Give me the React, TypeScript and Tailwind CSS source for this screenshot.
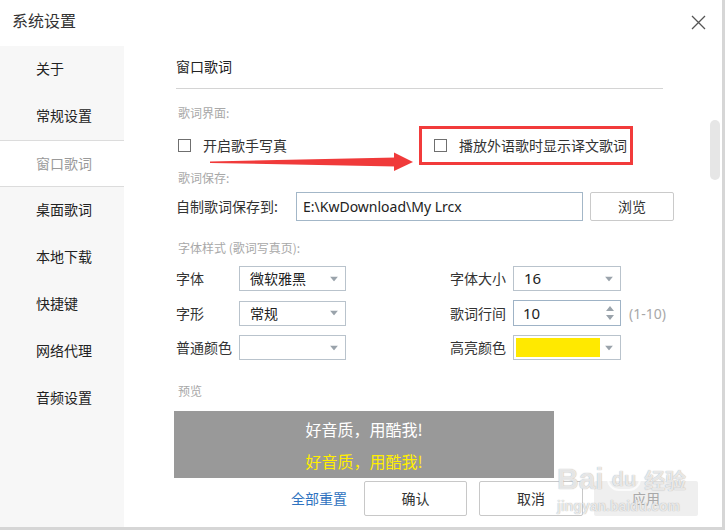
import type { ReactNode } from "react";

const Caret = () => (
  <svg width="8" height="5" viewBox="0 0 8 5" className="absolute right-[7px] top-1/2 -translate-y-1/2">
    <path d="M0 0 L8 0 L4 5 Z" fill="#9aa3ab" />
  </svg>
);

function Select({ w, children }: { w: string; children?: ReactNode }) {
  return (
    <div className={`relative flex h-[25px] items-center border border-[#b9c3cc] bg-white pl-[10px] text-[14px] text-[#222] ${w}`}>
      {children}
      <Caret />
    </div>
  );
}

const Box = () => <span className="h-[13px] w-[13px] shrink-0 border border-[#6f6f6f] bg-white" />;

const NAV = ["关于", "常规设置", "窗口歌词", "桌面歌词", "本地下载", "快捷键", "网络代理", "音频设置"];

export default function App() {
  return (
    <div className="h-[530px] w-[725px] bg-[#d6d6d6] font-['Microsoft_YaHei','Noto_Sans_CJK_SC',sans-serif]">
      <div className="relative flex h-[527px] w-[722px] flex-col bg-white">
        {/* title bar */}
        <div className="flex h-[46px] items-start justify-between">
          <span className="pl-[12px] pt-[9px] text-[16px] leading-[22px] text-[#333]">系统设置</span>
          <svg width="15" height="15" viewBox="0 0 15 15" className="mr-[16px] mt-[15px]">
            <path d="M1 1 L14 14 M14 1 L1 14" stroke="#555" strokeWidth="1.3" />
          </svg>
        </div>

        <div className="flex flex-1">
          {/* sidebar */}
          <div className="w-[124px] bg-[#f7f7f7]">
            {NAV.map((n) =>
              n === "窗口歌词" ? (
                <div key={n} className="flex h-[47px] items-center border-y border-[#dcdcdc] bg-white pl-[36px] text-[14px] text-[#9a9a9a]">
                  {n}
                </div>
              ) : (
                <div key={n} className="flex h-[47px] items-center pb-[2px] pl-[36px] text-[14px] text-[#222]">
                  {n}
                </div>
              )
            )}
          </div>

          {/* content */}
          <div className="flex-1 pl-[52px] text-[14px] text-[#333]">
            <div className="h-[43px] w-[487px] border-b border-[#d4d4d4] pt-[10px] leading-[20px] text-[#222]">窗口歌词</div>

            <div className="ml-[2px] mt-[16px] text-[12px] leading-[16px] text-[#a8a8a8]">歌词界面:</div>
            <div className="ml-[2px] mt-[5px] flex h-[39px] items-center">
              <div className="flex w-[241px] items-center gap-[12px]">
                <Box />
                <span>开启歌手写真</span>
              </div>
              <div className="flex h-[39px] w-[214px] items-center gap-[12px] border-[3px] border-[#f23b3b] pl-[12px]">
                <Box />
                <span>播放外语歌时显示译文歌词</span>
              </div>
            </div>

            <div className="ml-[2px] mt-[5px] text-[12px] leading-[16px] text-[#a8a8a8]">歌词保存:</div>
            <div className="mt-[6px] flex h-[29px] items-center">
              <span className="w-[120px]">自制歌词保存到:</span>
              <div className="flex h-[29px] w-[287px] items-center border border-[#a3b7c8] pl-[6px] font-['Noto_Sans',sans-serif] text-[14px] text-[#222]">
                E:\KwDownload\My Lrcx
              </div>
              <div className="ml-[7px] flex h-[29px] w-[84px] items-center justify-center rounded-[2px] border border-[#cacaca] text-[#333]">
                浏览
              </div>
            </div>

            <div className="ml-[2px] mt-[19px] text-[12px] leading-[16px] text-[#a8a8a8]">字体样式 (歌词写真页):</div>

            <div className="mt-[10px] flex flex-col gap-[9px]">
              <div className="flex items-center">
                <span className="w-[63px]">字体</span>
                <Select w="w-[107px]">微软雅黑</Select>
                <span className="ml-[104px] w-[63px]">字体大小</span>
                <Select w="w-[108px]">
                  <span className="font-['Noto_Sans',sans-serif] text-[15px]">16</span>
                </Select>
              </div>
              <div className="flex items-center">
                <span className="w-[63px]">字形</span>
                <Select w="w-[107px]">常规</Select>
                <span className="ml-[104px] w-[63px]">歌词行间</span>
                <div className="relative flex h-[26px] w-[108px] items-center border border-[#9fb3c6] pl-[9px] font-['Noto_Sans',sans-serif] text-[15px] text-[#222]">
                  10
                  <svg width="8" height="14" viewBox="0 0 8 14" className="absolute right-[6px] top-1/2 -translate-y-1/2">
                    <path d="M0 5 L8 5 L4 0 Z M0 9 L8 9 L4 14 Z" fill="#9aa3ab" />
                  </svg>
                </div>
                <span className="ml-[8px] font-['Noto_Sans',sans-serif] text-[14px] text-[#a8a8a8]">(1-10)</span>
              </div>
              <div className="flex items-center">
                <span className="w-[63px]">普通颜色</span>
                <Select w="w-[107px]" />
                <span className="ml-[104px] w-[63px]">高亮颜色</span>
                <div className="relative flex h-[25px] w-[108px] items-center border border-[#b9c3cc] pl-[2px]">
                  <span className="h-[19px] w-[84px] bg-[#ffe900]" />
                  <Caret />
                </div>
              </div>
            </div>

            <div className="ml-[2px] mt-[23px] text-[12px] leading-[16px] text-[#a8a8a8]">预览</div>
            <div className="-ml-[2px] mt-[12px] flex h-[67px] w-[380px] flex-col items-center gap-[12px] bg-[#999999] pt-[8px] text-[16px] leading-[20px]">
              <span className="text-white">好音质，用酷我!</span>
              <span className="text-[#ffee00]">好音质，用酷我!</span>
            </div>

            <div className="mt-[3px] flex h-[35px] items-center">
              <span className="ml-[115px] w-[73px] text-[#2f73c0]">全部重置</span>
              <div className="flex h-[35px] w-[103px] items-center justify-center rounded-[2px] border border-[#c8c8c8]">确认</div>
              <div className="ml-[12px] flex h-[35px] w-[104px] items-center justify-center rounded-[2px] border border-[#c8c8c8]">取消</div>
              <div className="ml-[11px] flex h-[35px] w-[104px] items-center justify-center rounded-[2px] bg-[#efefef] text-[#a9a9a9]">应用</div>
            </div>
          </div>
        </div>

        {/* scrollbar thumb */}
        <div className="absolute left-[710px] top-[120px] h-[60px] w-[10px] rounded-full bg-[#e6e6e6]" />

        {/* red annotation arrow */}
        <svg width="725" height="530" className="pointer-events-none absolute left-0 top-0">
          <path d="M210 161.5 L396 157.5 L396 166.5 L210 163 Z" fill="#f03a3a" />
          <path d="M394 152.5 L413 162 L394 171 Z" fill="#f03a3a" />
        </svg>

        {/* watermark */}
        <div className="pointer-events-none absolute left-[557px] top-[464px] flex flex-col items-start whitespace-nowrap leading-none text-white/75 [text-shadow:0_0_1px_#9a9a9a]">
          <div className="flex items-center">
            <span className="font-['Liberation_Sans',sans-serif] text-[30px] font-bold">Bai</span>
            <span className="ml-[3px] rounded-full border-[2px] border-white/75 px-[3px] font-['Liberation_Sans',sans-serif] text-[20px] font-bold">du</span>
            <span className="ml-[3px] font-['Noto_Sans_CJK_SC',sans-serif] text-[21px] font-bold">经验</span>
          </div>
          <span className="mt-[5px] font-['Liberation_Sans',sans-serif] text-[14px] font-bold">jingyan.baidu.com</span>
        </div>
      </div>
    </div>
  );
}
